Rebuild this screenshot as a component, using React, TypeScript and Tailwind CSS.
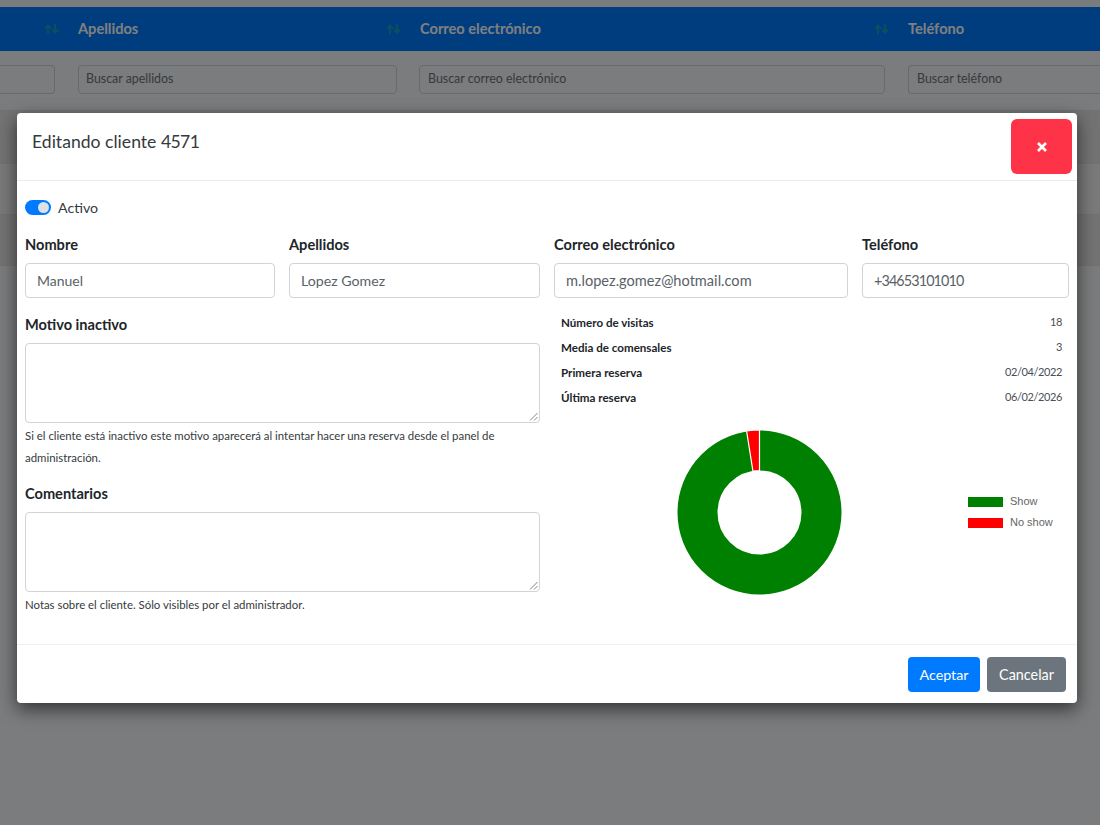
import React from "react";

function Sort() {
  return (
    <svg width="15" height="10" viewBox="0 0 15 10" className="text-[#17a2b8]" fill="none" stroke="currentColor" strokeWidth="1.8">
      <path d="M4 10V1.5M1 4.5l3-3 3 3" />
      <path d="M11 0v8.5M8 5.5l3 3 3-3" />
    </svg>
  );
}

function Th({ label, w }: { label: string; w: string }) {
  return (
    <div className={`${w} flex items-center shrink-0`}>
      <div className="w-[78px] flex justify-end pr-[19px]"><Sort /></div>
      <span className="font-bold text-white">{label}</span>
    </div>
  );
}

function Input({ value, w, text }: { value: string; w: string; text: string }) {
  return (
    <div className={`${w} ${text} h-[35px] border border-[#ced4da] rounded-[4px] px-[11px] flex items-center text-[#5a6268] bg-white`}>{value}</div>
  );
}

function Area() {
  return (
    <div className="relative h-[80px] border border-[#ced4da] rounded-[4px] bg-white">
      <svg width="9" height="9" viewBox="0 0 9 9" className="absolute right-[1px] bottom-[1px]" stroke="#666" strokeWidth="0.8">
        <path d="M1 8.5L8.5 1M5 8.5L8.5 5" />
      </svg>
    </div>
  );
}

function Stat({ k, v }: { k: string; v: string }) {
  return (
    <div className="h-[25px] flex items-center justify-between px-[7px] text-[11.6px]">
      <span className="font-bold text-[#212529]">{k}</span>
      <span className="text-[#495057] text-[11px] tracking-[-0.4px]">{v}</span>
    </div>
  );
}

function Donut() {
  const cx = 82.5, cy = 82.5;
  const a = (-9 * Math.PI) / 180;
  const p = (rad: number, t: number) => `${cx + rad * Math.sin(t)} ${cy - rad * Math.cos(t)}`;
  return (
    <svg width="165" height="165" viewBox="0 0 165 165">
      <circle cx={cx} cy={cy} r={62} fill="none" stroke="#008000" strokeWidth="40" />
      <path d={`M${p(82.5, 0)} A82.5 82.5 0 0 0 ${p(82.5, a)} L${p(42, a)} A42 42 0 0 1 ${p(42, 0)} Z`} fill="#ff0000" stroke="#fff" strokeWidth="1.2" />
    </svg>
  );
}

export default function App() {
  return (
    <div className="relative w-[1100px] h-[825px] overflow-hidden bg-[#f6f8fa] font-['Lato','Noto_Sans',sans-serif] text-[16px] text-[#212529]">
      {/* page behind */}
      <div className="h-[7px] bg-[#f4f6f9]" />
      <div className="h-[44px] bg-[#007bff] flex items-center text-[14.6px]">
        <Th label="Apellidos" w="w-[342px]" />
        <Th label="Correo electrónico" w="w-[488px]" />
        <Th label="Teléfono" w="w-[270px]" />
      </div>
      <div className="h-[59px] pb-[2px] flex items-center text-[#6c757d] text-[12.4px]">
        <div className="w-[55px] h-[29px] border border-[#ced4da] rounded-r-[4px] border-l-0 shrink-0" />
        <div className="w-[23px] shrink-0" />
        <div className="w-[319px] h-[29px] border border-[#ced4da] rounded-[4px] px-[7px] flex items-center shrink-0">Buscar apellidos</div>
        <div className="w-[22px] shrink-0" />
        <div className="w-[466px] h-[29px] border border-[#ced4da] rounded-[4px] px-[8px] flex items-center shrink-0">Buscar correo electrónico</div>
        <div className="w-[23px] shrink-0" />
        <div className="w-[192px] h-[29px] border border-[#ced4da] border-r-0 rounded-l-[4px] px-[8px] flex items-center shrink-0">Buscar teléfono</div>
      </div>
      <div className="h-[53px] border-t border-[#dee2e6] bg-[#e6e6e6]" />
      <div className="h-[51px] border-t border-[#dee2e6] bg-[#f4f4f4]" />
      <div className="h-[52px] border-y border-[#dee2e6] bg-[#e6e6e6]" />

      {/* backdrop */}
      <div className="absolute inset-0 bg-black/50" />

      {/* modal */}
      <div className="absolute left-[17px] top-[113px] w-[1060px] h-[590px] bg-white rounded-[4px] shadow-[0_6px_18px_rgba(0,0,0,0.6)] flex flex-col">
        <div className="h-[68px] shrink-0 border-b border-[#e9ecef] flex justify-between pl-[15px] pr-[5px] pt-[6px]">
          <div className="text-[17.6px] leading-[27px] text-[#343a40] mt-[9px]">Editando cliente <span className="tracking-[-0.6px]">4571</span></div>
          <div className="w-[61px] h-[55px] bg-[#ff3347] rounded-[6px] flex items-center justify-center">
            <svg width="10" height="10" viewBox="0 0 10 10" stroke="#fff" strokeWidth="2.6"><path d="M1 1l8 8M9 1l-8 8" /></svg>
          </div>
        </div>

        <div className="flex-1 px-2 flex flex-col">
          <div className="flex items-center gap-[7px] mt-[18px] h-[17px]">
            <div className="w-[26px] h-[15px] rounded-full bg-[#007bff] relative">
              <div className="absolute right-[2px] top-[2px] w-[11px] h-[11px] rounded-full bg-[#dee2e6]" />
            </div>
            <span className="text-[#343a40] text-[14.2px]">Activo</span>
          </div>

          <div className="flex gap-[14px] mt-[17px] font-bold text-[14.6px] leading-[24px]">
            <div className="w-[250px]">Nombre</div>
            <div className="w-[251px]">Apellidos</div>
            <div className="w-[294px]">Correo electrónico</div>
            <div className="w-[207px]">Teléfono</div>
          </div>
          <div className="flex gap-[14px] mt-[6px]">
            <Input value="Manuel" w="w-[250px]" text="text-[14px]" />
            <Input value="Lopez Gomez" w="w-[251px]" text="text-[14.2px]" />
            <Input value="m.lopez.gomez@hotmail.com" w="w-[294px]" text="text-[14.6px]" />
            <Input value="+34653101010" w="w-[207px]" text="text-[14.4px] tracking-[-0.9px]" />
          </div>

          <div className="flex gap-[14px] mt-[12px]">
            <div className="w-[515px] shrink-0">
              <div className="font-bold text-[14.6px] leading-[24px] mb-[6px] mt-[3px]">Motivo inactivo</div>
              <Area />
              <p className="text-[11.4px] leading-[22px] text-[#343a40] mt-[2px]">Si el cliente está inactivo este motivo aparecerá al intentar hacer una reserva desde el panel de administración.</p>
              <div className="font-bold text-[14.6px] leading-[24px] mt-[13px] mb-[6px]">Comentarios</div>
              <Area />
              <p className="text-[11.4px] leading-[22px] text-[#343a40] mt-[2px]">Notas sobre el cliente. Sólo visibles por el administrador.</p>
            </div>
            <div className="flex-1">
              <Stat k="Número de visitas" v="18" />
              <Stat k="Media de comensales" v="3" />
              <Stat k="Primera reserva" v="02/04/2022" />
              <Stat k="Última reserva" v="06/02/2026" />
              <div className="flex mt-[20px]">
                <div className="ml-[123px] w-[165px] h-[165px] shrink-0"><Donut /></div>
                <div className="ml-[126px] mt-[61px] font-['Liberation_Sans',sans-serif] text-[11px] text-[#666]">
                  <div className="flex items-center gap-[7px] h-[21px]"><div className="w-[35px] h-[10px] bg-[#008000]" />Show</div>
                  <div className="flex items-center gap-[7px] h-[21px]"><div className="w-[35px] h-[10px] bg-[#ff0000]" />No show</div>
                </div>
              </div>
            </div>
          </div>
        </div>

        <div className="h-[59px] shrink-0 border-t border-[#eef0f2] flex justify-end items-center gap-[7px] pr-[11px] pt-[1px]">
          <button className="w-[72px] h-[35px] bg-[#007bff] text-white rounded-[4px] text-[14.3px]">Aceptar</button>
          <button className="w-[79px] h-[35px] bg-[#6c757d] text-white rounded-[4px] text-[14.4px]">Cancelar</button>
        </div>
      </div>
    </div>
  );
}
